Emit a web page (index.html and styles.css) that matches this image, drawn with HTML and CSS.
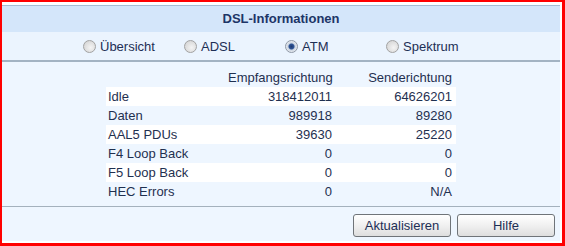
FILE: index.html
```html
<!DOCTYPE html>
<html lang="de">

<head>
  <meta charset="UTF-8" />
  <meta name="viewport" content="width=device-width, initial-scale=1.0" />
  <title>DSL-Informationen</title>
  <link rel="stylesheet" href="styles.css">
</head>

<body>
  <div class="frame">
    <div class="panel">
      <div class="panel-head">DSL-Informationen</div>
      <div class="tabs">
        <label class="tab"><input type="radio" name="view" />Übersicht</label>
        <label class="tab"><input type="radio" name="view" />ADSL</label>
        <label class="tab"><input type="radio" name="view" checked />ATM</label>
        <label class="tab"><input type="radio" name="view" />Spektrum</label>
      </div>
      <div class="panel-body">
        <table class="stats">
          <colgroup>
            <col class="col-label" />
            <col class="col-down" />
            <col class="col-up" />
          </colgroup>
          <thead>
            <tr>
              <th></th>
              <th>Empfangsrichtung</th>
              <th>Senderichtung</th>
            </tr>
          </thead>
          <tbody>
            <tr><td>Idle</td><td>318412011</td><td>64626201</td></tr>
            <tr><td>Daten</td><td>989918</td><td>89280</td></tr>
            <tr><td>AAL5 PDUs</td><td>39630</td><td>25220</td></tr>
            <tr><td>F4 Loop Back</td><td>0</td><td>0</td></tr>
            <tr><td>F5 Loop Back</td><td>0</td><td>0</td></tr>
            <tr><td>HEC Errors</td><td>0</td><td>N/A</td></tr>
          </tbody>
        </table>
      </div>
      <div class="panel-foot">
        <button class="btn">Aktualisieren</button>
        <button class="btn">Hilfe</button>
      </div>
    </div>
  </div>
</body>

</html>
```

FILE: styles.css
```css
* {
  box-sizing: border-box;
}

body {
  margin: 0;
  background: #fff;
  font-family: "Liberation Sans", Arial, sans-serif;
  font-size: 13px;
  color: #1f3050;
}

.frame {
  width: 565px;
  height: 246px;
  border-style: solid;
  border-color: #f00;
  border-width: 2px 3px 3px 2px;
  padding: 3px 2px 2px 0;
}

.panel {
  height: 100%;
  background: #eef6ff;
  display: flex;
  flex-direction: column;
}

.panel-head {
  height: 27px;
  border-top: 1px solid #a5bdd4;
  background: #d4e6fa;
  color: #1c3567;
  font-weight: bold;
  text-align: center;
  line-height: 25px;
}

.tabs {
  height: 30px;
  background: #ebf4fe;
  border-bottom: 2px solid #a3b3c3;
  display: flex;
  align-items: center;
  padding-left: 81px;
  padding-top: 1px;
  color: #1d2f55;
}

.tab {
  width: 101px;
  display: flex;
  align-items: center;
  gap: 4px;
  cursor: pointer;
}

.tab input {
  appearance: none;
  margin: 0;
  width: 13px;
  height: 13px;
  border: 1px solid #a2a2a2;
  border-radius: 50%;
  background: radial-gradient(circle at 60% 60%, #f4f4f4 0, #d6d6d6 80%);
}

.tab input:checked {
  border-color: #8e98a6;
  background: radial-gradient(circle, #1e3a70 0, #2f5597 2.5px, #c9d3e0 3.5px, #eef0f3 6px);
}

.panel-body {
  flex: 1;
  padding-top: 6px;
}

.stats {
  width: 350px;
  margin: 0 auto;
  border-collapse: collapse;
  table-layout: fixed;
}

.col-label {
  width: 120px;
}

.col-down {
  width: 110px;
}

.col-up {
  width: 120px;
}

.stats th,
.stats td {
  height: 19px;
  padding: 0 4px 0 2px;
  line-height: 19px;
  font-weight: normal;
  text-align: right;
  white-space: nowrap;
}

.stats th:first-child,
.stats td:first-child {
  text-align: left;
}

.stats tbody tr:nth-child(odd) {
  background: #fff;
}

.panel-foot {
  border-top: 1px solid #a4b1bd;
  padding: 7px 5px 4px 0;
  display: flex;
  justify-content: flex-end;
  gap: 6px;
}

.btn {
  width: 98px;
  height: 23px;
  border: 1px solid #6f7479;
  border-radius: 3px;
  background: linear-gradient(#ffffff, #f2f2f2 45%, #dedede);
  font-family: inherit;
  font-size: 13px;
  color: #1d2f55;
  padding: 0;
  cursor: pointer;
}
```
